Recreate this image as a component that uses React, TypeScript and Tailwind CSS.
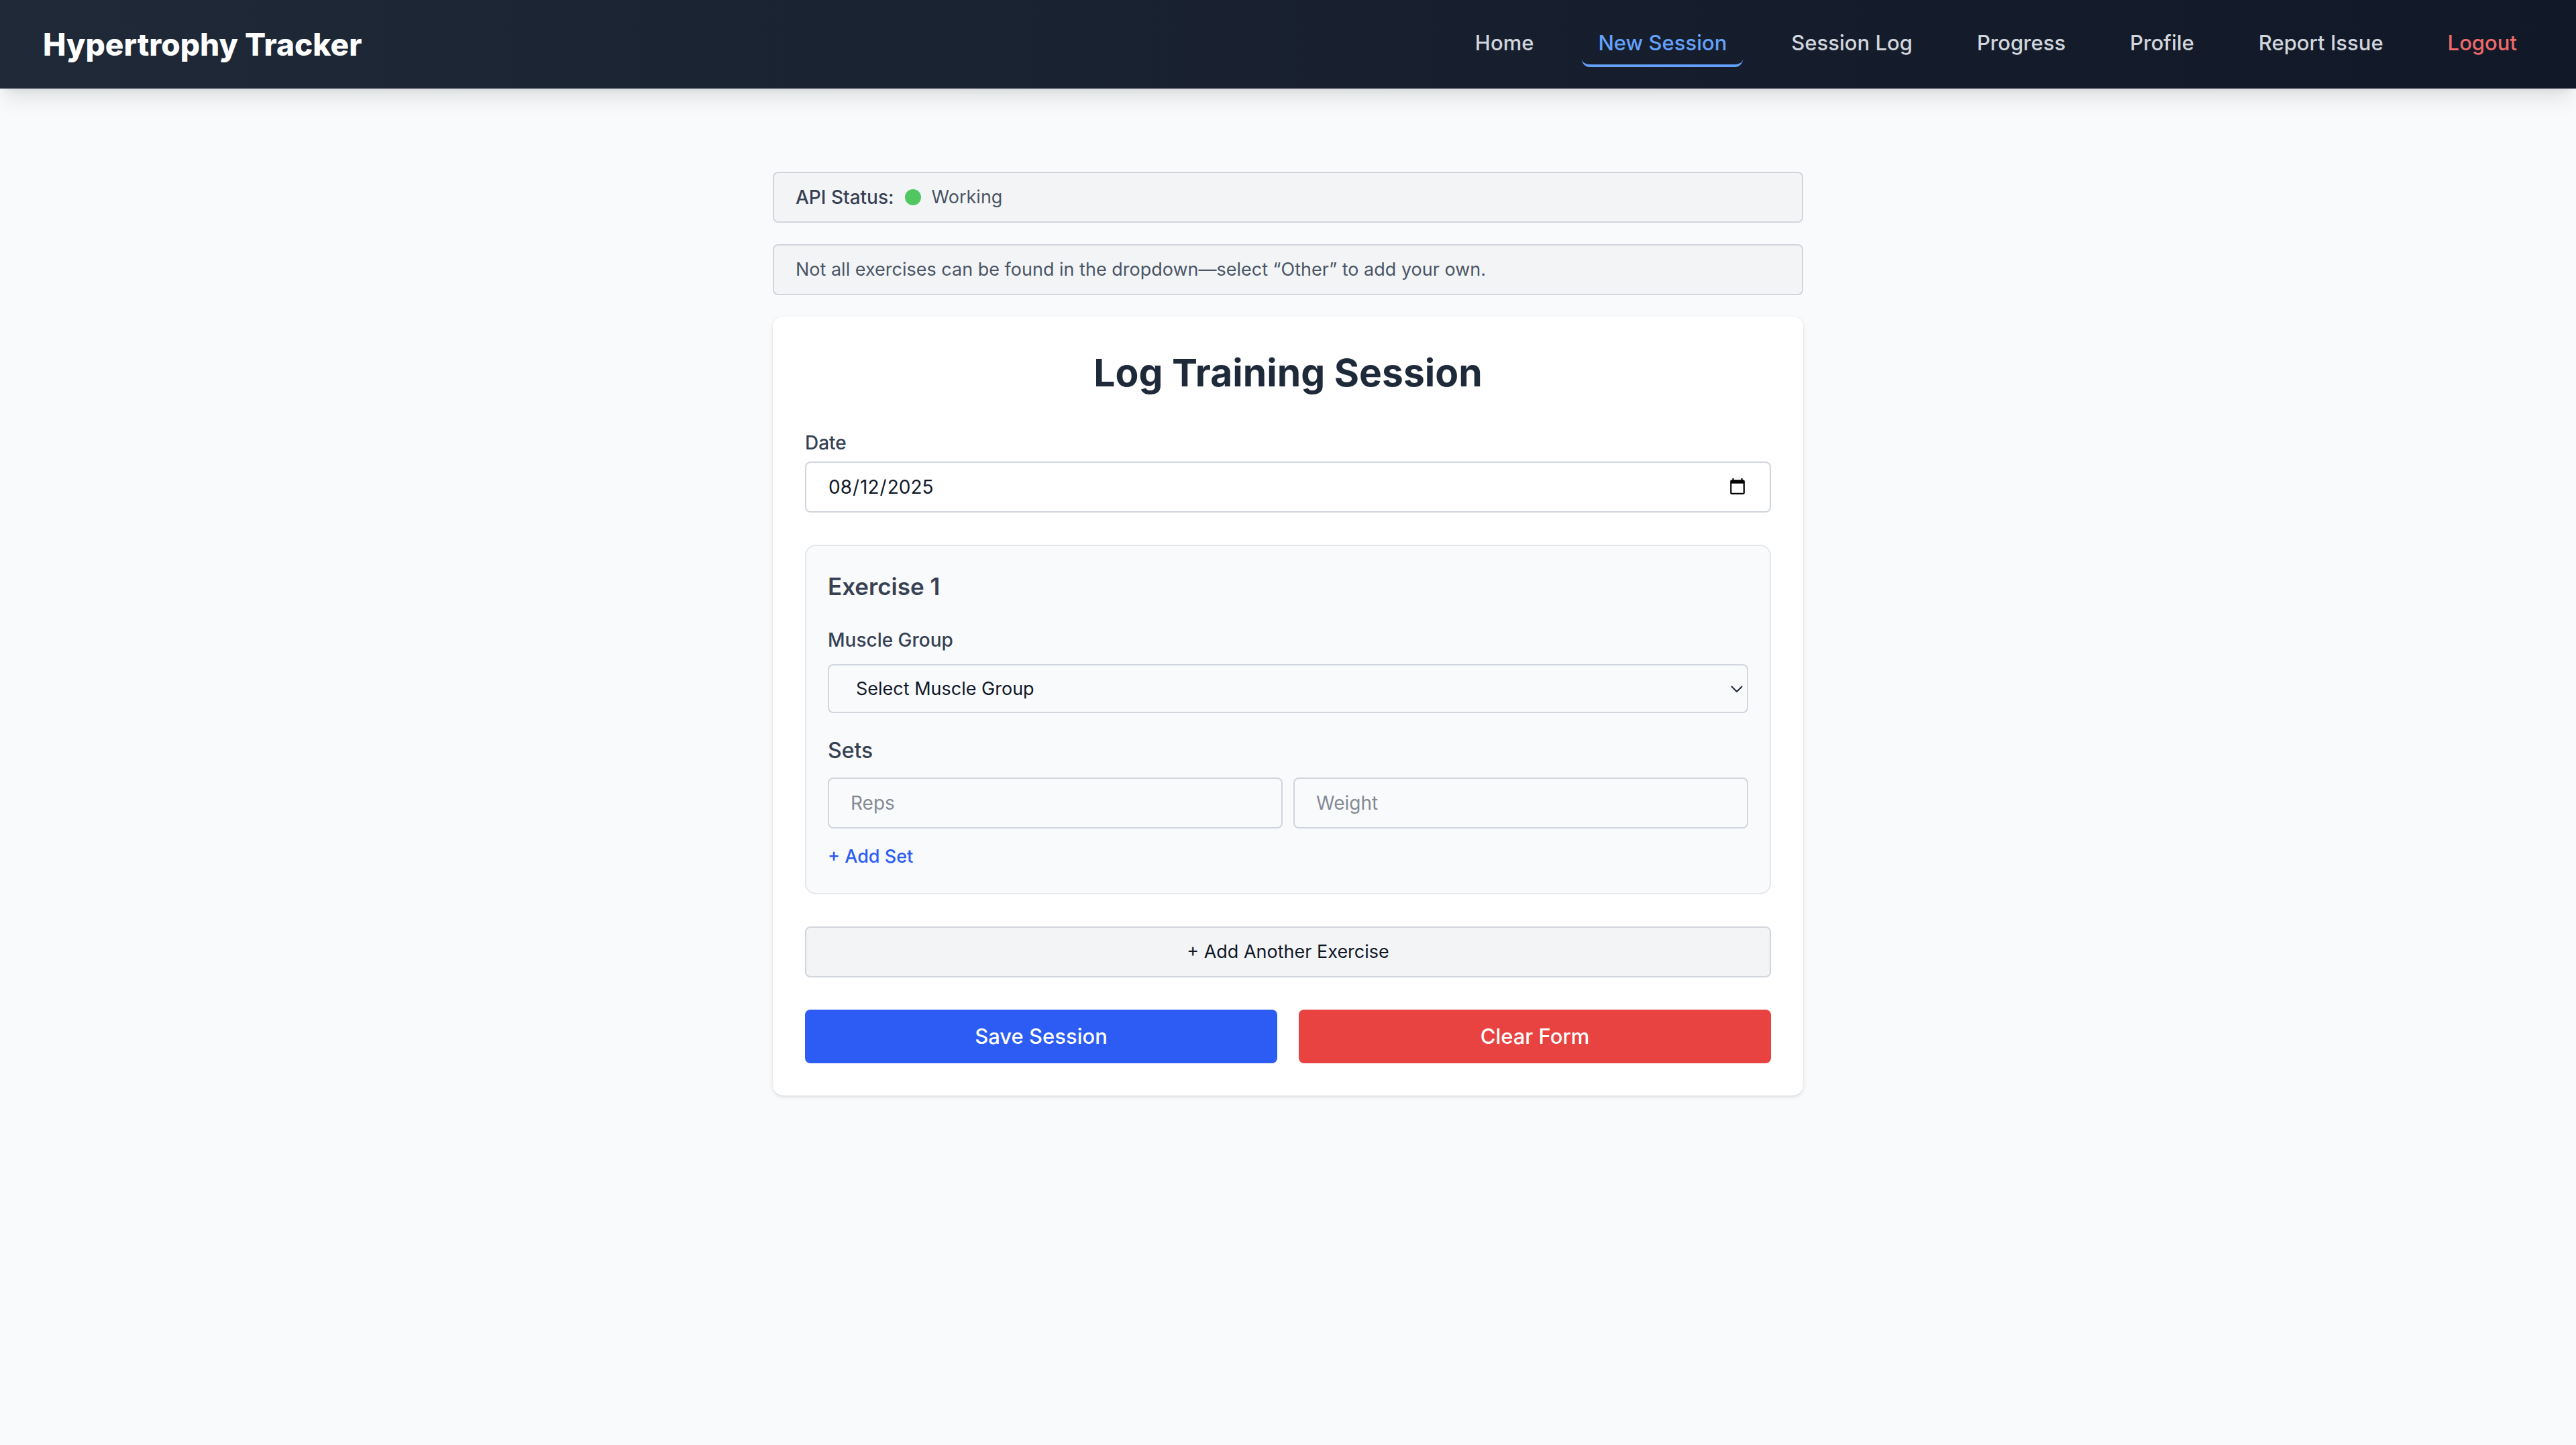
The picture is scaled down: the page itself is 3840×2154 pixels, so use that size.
import { useState, type ReactNode } from "react";

type NavItem = { label: string; tone: "default" | "active" | "danger" };

const navItems: NavItem[] = [
  { label: "Home", tone: "default" },
  { label: "New Session", tone: "active" },
  { label: "Session Log", tone: "default" },
  { label: "Progress", tone: "default" },
  { label: "Profile", tone: "default" },
  { label: "Report Issue", tone: "default" },
  { label: "Logout", tone: "danger" },
];

const toneClasses: Record<NavItem["tone"], string> = {
  default: "border-transparent text-[#d1d5dc]",
  active: "border-[#64a1fb] text-[#64a1fb]",
  danger: "border-transparent text-[#ee6a6a]",
};

const muscleGroups = ["Chest", "Back", "Shoulders", "Biceps", "Triceps", "Legs", "Other"];

function Header() {
  return (
    <header className="relative flex items-center justify-between bg-linear-to-r from-[#1f2937] to-[#111827] px-16 py-8 shadow-[0_20px_30px_-6px_rgb(0_0_0/0.1),0_8px_12px_-8px_rgb(0_0_0/0.1)]">
      <a href="#home" className="text-[46px] leading-[64px] font-extrabold text-white">
        Hypertrophy Tracker
      </a>
      <nav className="flex items-center gap-12">
        {navItems.map((item) => (
          <a
            key={item.label}
            href={"#" + item.label.toLowerCase().replace(" ", "-")}
            className={"rounded-xl border-b-4 px-6 py-2 text-[31px] leading-[48px] font-medium " + toneClasses[item.tone]}
          >
            {item.label}
          </a>
        ))}
      </nav>
    </header>
  );
}

function Notice({ children }: { children: ReactNode }) {
  return (
    <div className="flex items-center gap-4 rounded-lg border-2 border-[#d1d5dc] bg-[#f3f4f6] px-8 py-4 text-[27px] leading-[40px] text-[#4a5565]">
      {children}
    </div>
  );
}

const fieldClass =
  "w-full min-w-0 rounded-lg border-2 border-[#d1d5dc] bg-transparent px-8 py-4 leading-[40px] text-[#101828] outline-none placeholder:text-[#858a93]";

function ExercisePanel({ index }: { index: number }) {
  return (
    <section className="flex flex-col rounded-2xl border-2 border-[#e5e7eb] bg-[#f9fafc] p-8">
      <h2 className="mb-8 text-[35px] leading-[56px] font-semibold text-[#364153]">Exercise {index}</h2>
      <label htmlFor={"muscle-" + index} className="mb-4 text-[28px] leading-[40px] font-medium text-[#364153]">
        Muscle Group
      </label>
      <div className="relative mb-8 flex">
        <select
          id={"muscle-" + index}
          defaultValue=""
          className="h-[73px] w-full appearance-none rounded-lg border-2 border-[#d1d5dc] bg-transparent px-10 text-[27px] leading-[40px] text-[#101828] outline-none"
        >
          <option value="">Select Muscle Group</option>
          {muscleGroups.map((group) => (
            <option key={group}>{group}</option>
          ))}
        </select>
        <svg viewBox="0 0 18 10" fill="none" className="pointer-events-none absolute top-8 right-2 h-[10px] w-[18px]">
          <path d="M1 1l8 8 8-8" stroke="#1c2130" strokeWidth="2" />
        </svg>
      </div>
      <h3 className="mb-4 text-[32px] leading-[48px] font-medium text-[#364153]">Sets</h3>
      <div className="mb-5 grid grid-cols-2 gap-4">
        <input type="text" inputMode="numeric" aria-label="Reps" placeholder="Reps" className={fieldClass + " text-[28px]"} />
        <input type="text" inputMode="numeric" aria-label="Weight" placeholder="Weight" className={fieldClass + " text-[28px]"} />
      </div>
      <button type="button" className="self-start text-[27px] leading-[44px] font-medium text-[#2c5cf3]">
        + Add Set
      </button>
    </section>
  );
}

export default function App() {
  const [date, setDate] = useState("2025-08-12");

  return (
    <div className="min-h-screen bg-[#f9fafc] font-['Inter',sans-serif]">
      <Header />
      <main className="mx-auto flex max-w-[1536px] flex-col gap-8 pt-[124px] pb-16">
        <Notice>
          <span className="text-[28px] font-medium text-[#364153]">API Status:</span>
          <span className="size-6 rounded-full bg-[#50c761]" />
          <span>Working</span>
        </Notice>
        <Notice>Not all exercises can be found in the dropdown—select “Other” to add your own.</Notice>

        <form
          onSubmit={(event) => event.preventDefault()}
          className="flex flex-col gap-12 rounded-2xl bg-white p-12 shadow-[0_2px_6px_0_rgb(0_0_0/0.1),0_2px_4px_-2px_rgb(0_0_0/0.1)]"
        >
          <h1 className="text-center text-[57px] leading-[72px] font-bold text-[#1e2939]">Log Training Session</h1>
          <div className="flex flex-col gap-2">
            <label htmlFor="session-date" className="text-[28px] leading-[40px] font-medium text-[#364153]">
              Date
            </label>
            <input
              id="session-date"
              type="date"
              value={date}
              onChange={(event) => setDate(event.target.value)}
              className={fieldClass + " h-[76px] text-[28px]"}
            />
          </div>
          <ExercisePanel index={1} />
          <button
            type="button"
            className="rounded-lg border-2 border-[#d1d5dc] bg-[#f3f4f6] px-8 py-4 text-[27px] leading-[40px] text-[#101828]"
          >
            + Add Another Exercise
          </button>
          <div className="grid grid-cols-2 gap-8">
            <button type="submit" className="rounded-lg bg-[#2c5cf3] py-4 text-[31px] leading-[48px] font-medium text-white">
              Save Session
            </button>
            <button type="reset" className="rounded-lg bg-[#e84341] py-4 text-[31px] leading-[48px] font-medium text-white">
              Clear Form
            </button>
          </div>
        </form>
      </main>
    </div>
  );
}
